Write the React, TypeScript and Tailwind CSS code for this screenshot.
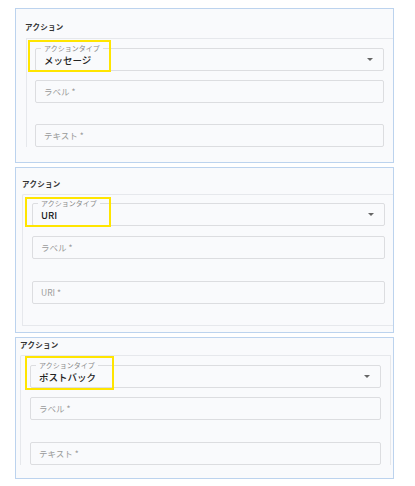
import React from "react";

const font = "font-['Noto_Sans_CJK_JP','Noto_Sans',sans-serif]";

const SelectField = ({ value }: { value: string }) => (
  <div className="relative h-[23px] rounded-[2px] border border-[#dcdde0] flex items-center pl-[8px] pr-[10px]">
    <span className="absolute -top-[6px] left-[5px] px-[3px] bg-[#f9fafc] text-[7px] leading-[10px] text-[#8a8a8a]">
      アクションタイプ
    </span>
    <span className="flex-1 text-[9.5px] leading-[12px] font-medium text-[#222]">{value}</span>
    <span className="w-0 h-0 border-l-[3px] border-r-[3px] border-t-[3px] border-l-transparent border-r-transparent border-t-[#666]" />
  </div>
);

const TextField = ({ placeholder, className }: { placeholder: string; className: string }) => (
  <div className={`h-[23px] rounded-[2px] border border-[#dcdde0] flex items-center pl-[8px] text-[8.5px] text-[#9a9a9a] ${className}`}>
    {placeholder}
  </div>
);

const Highlight = ({ className }: { className: string }) => (
  <div className={`absolute border-2 border-[#ffe500] pointer-events-none ${className}`} />
);

export default function App() {
  return (
    <div className={`min-h-screen bg-white pt-[8px] ${font}`}>
      {/* panel 1 */}
      <div className="relative ml-[15px] w-[379px] h-[155px] overflow-hidden border border-[#bcd3ee] bg-[#f9fafc]">
        <div className="h-[29px] pl-[9px] pt-[13px] text-[7.5px] leading-[10px] font-bold text-[#333] tracking-[0.3px]">アクション</div>
        <div className="ml-[10px] border-l border-t border-[#e6e8ec] pl-[8px] pr-[9px] pt-[9px]">
          <SelectField value="メッセージ" />
          <TextField placeholder="ラベル *" className="mt-[9px]" />
          <TextField placeholder="テキスト *" className="mt-[21px]" />
        </div>
        <Highlight className="left-[12px] top-[31px] w-[83px] h-[32px]" />
      </div>

      {/* panel 2 */}
      <div className="relative mt-[4px] ml-[15px] w-[379px] h-[166px] overflow-hidden border border-[#bcd3ee] bg-[#f9fafc]">
        <div className="h-[26px] pl-[6px] pt-[11px] text-[7.5px] leading-[10px] font-bold text-[#333] tracking-[0.3px]">アクション</div>
        <div className="ml-[6px] h-[132px] rounded-tl-[2px] border-l border-t border-b border-[#e6e8ec] pl-[9px] pr-[8px] pt-[8px]">
          <SelectField value="URI" />
          <TextField placeholder="ラベル *" className="mt-[10px]" />
          <TextField placeholder="URI *" className="mt-[22px]" />
        </div>
        <Highlight className="left-[9px] top-[29px] w-[86px] h-[30px]" />
      </div>

      {/* panel 3 */}
      <div className="relative mt-[4px] ml-[15px] w-[379px] h-[142px] overflow-hidden border border-[#bcd3ee] bg-[#f9fafc]">
        <div className="h-[17px] pl-[4px] pt-[2px] text-[7.5px] leading-[10px] font-bold text-[#333] tracking-[0.3px]">アクション</div>
        <div className="ml-[4px] mr-[2px] rounded-tl-[2px] border-l border-t border-r border-[#e6e8ec] pl-[9px] pr-[9px] pt-[9px]">
          <SelectField value="ポストバック" />
          <TextField placeholder="ラベル *" className="mt-[9px]" />
          <TextField placeholder="テキスト *" className="mt-[22px]" />
        </div>
        <Highlight className="left-[9px] top-[18px] w-[89px] h-[34px]" />
      </div>
    </div>
  );
}
